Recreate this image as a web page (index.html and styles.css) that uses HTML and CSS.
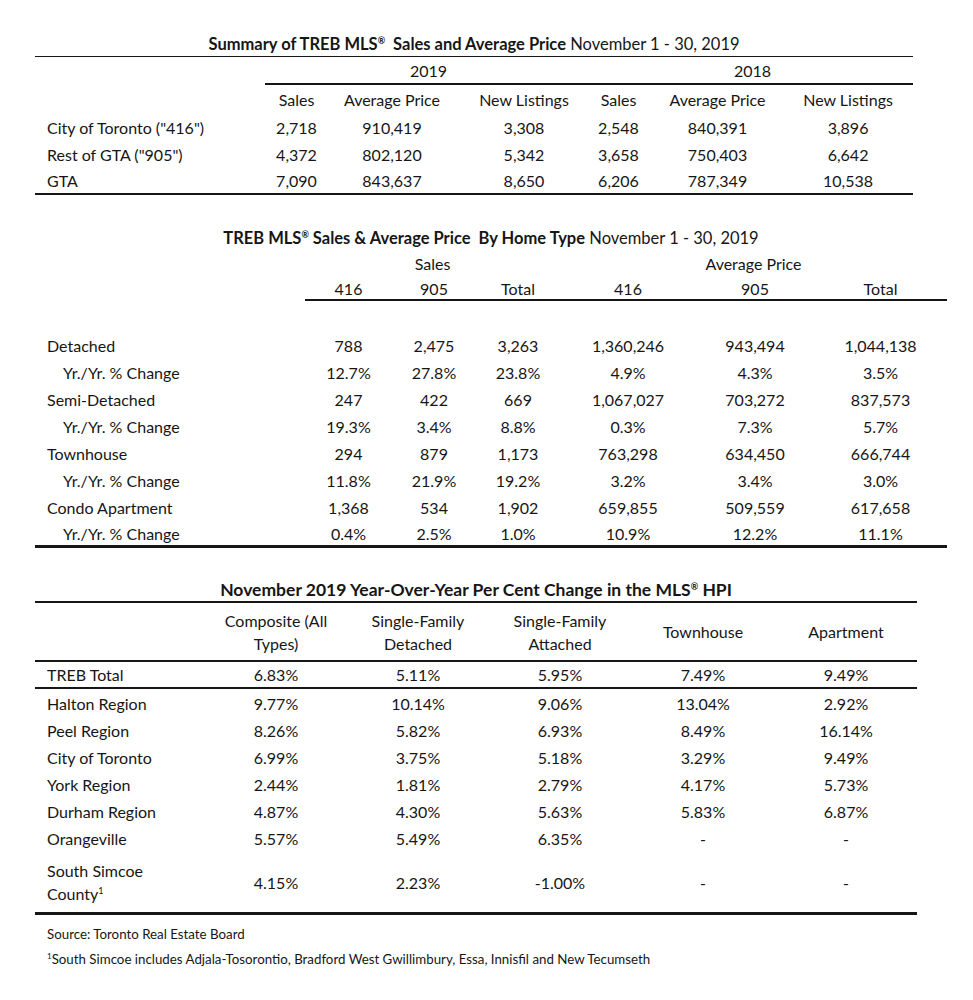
FILE: index.html
```html
<!DOCTYPE html>
<html>
<head>
<meta charset="utf-8">
<link rel="stylesheet" href="styles.css">
</head>
<body>
<div class="page">

<table class="t t1">
  <colgroup>
    <col style="width:230px"><col style="width:63px"><col style="width:128px"><col style="width:136px"><col style="width:53px"><col style="width:145px"><col style="width:123px">
  </colgroup>
  <tr class="title-row">
    <td colspan="7" class="title"><b>Summary of TREB MLS<sup>®</sup>&nbsp; Sales and Average Price</b> November 1 - 30, 2019</td>
  </tr>
  <tr class="year-row">
    <td></td>
    <td colspan="3" class="rule">2019</td>
    <td colspan="3" class="rule">2018</td>
  </tr>
  <tr class="head-row">
    <td></td><td>Sales</td><td>Average Price</td><td>New Listings</td><td>Sales</td><td>Average Price</td><td class="last">New Listings</td>
  </tr>
  <tr class="row">
    <td class="label">City of Toronto ("416")</td><td>2,718</td><td>910,419</td><td>3,308</td><td>2,548</td><td>840,391</td><td class="last">3,896</td>
  </tr>
  <tr class="row">
    <td class="label">Rest of GTA ("905")</td><td>4,372</td><td>802,120</td><td>5,342</td><td>3,658</td><td>750,403</td><td class="last">6,642</td>
  </tr>
  <tr class="row end">
    <td class="label">GTA</td><td>7,090</td><td>843,637</td><td>8,650</td><td>6,206</td><td>787,349</td><td class="last">10,538</td>
  </tr>
</table>

<table class="t t2">
  <colgroup>
    <col style="width:270px"><col style="width:87px"><col style="width:84px"><col style="width:84px"><col style="width:136px"><col style="width:118px"><col style="width:133px">
  </colgroup>
  <tr class="title-row">
    <td colspan="7" class="title"><b>TREB MLS<sup>®</sup> Sales &amp; Average Price&nbsp; By Home Type</b> November 1 - 30, 2019</td>
  </tr>
  <tr class="group-row">
    <td></td><td colspan="3">Sales</td><td colspan="3">Average Price</td>
  </tr>
  <tr class="colhead-row">
    <td></td><td class="rule">416</td><td class="rule">905</td><td class="rule">Total</td><td class="rule">416</td><td class="rule">905</td><td class="rule">Total</td>
  </tr>
  <tr class="blank-row"><td colspan="7"></td></tr>
  <tr class="row"><td class="label">Detached</td><td>788</td><td>2,475</td><td>3,263</td><td>1,360,246</td><td>943,494</td><td>1,044,138</td></tr>
  <tr class="row"><td class="label sub">Yr./Yr. % Change</td><td>12.7%</td><td>27.8%</td><td>23.8%</td><td>4.9%</td><td>4.3%</td><td>3.5%</td></tr>
  <tr class="row"><td class="label">Semi-Detached</td><td>247</td><td>422</td><td>669</td><td>1,067,027</td><td>703,272</td><td>837,573</td></tr>
  <tr class="row"><td class="label sub">Yr./Yr. % Change</td><td>19.3%</td><td>3.4%</td><td>8.8%</td><td>0.3%</td><td>7.3%</td><td>5.7%</td></tr>
  <tr class="row"><td class="label">Townhouse</td><td>294</td><td>879</td><td>1,173</td><td>763,298</td><td>634,450</td><td>666,744</td></tr>
  <tr class="row"><td class="label sub">Yr./Yr. % Change</td><td>11.8%</td><td>21.9%</td><td>19.2%</td><td>3.2%</td><td>3.4%</td><td>3.0%</td></tr>
  <tr class="row"><td class="label">Condo Apartment</td><td>1,368</td><td>534</td><td>1,902</td><td>659,855</td><td>509,559</td><td>617,658</td></tr>
  <tr class="row end"><td class="label sub">Yr./Yr. % Change</td><td>0.4%</td><td>2.5%</td><td>1.0%</td><td>10.9%</td><td>12.2%</td><td>11.1%</td></tr>
</table>

<table class="t t3">
  <colgroup>
    <col style="width:170px"><col style="width:142px"><col style="width:142px"><col style="width:142px"><col style="width:144px"><col style="width:142px">
  </colgroup>
  <tr class="title-row">
    <td colspan="6" class="title"><b>November 2019 Year-Over-Year Per Cent Change in the MLS<sup>®</sup> HPI</b></td>
  </tr>
  <tr class="hpi-head">
    <td></td><td>Composite (All<br>Types)</td><td>Single-Family<br>Detached</td><td>Single-Family<br>Attached</td><td>Townhouse</td><td>Apartment</td>
  </tr>
  <tr class="total-row">
    <td class="label">TREB Total</td><td>6.83%</td><td>5.11%</td><td>5.95%</td><td>7.49%</td><td>9.49%</td>
  </tr>
  <tr class="row first"><td class="label">Halton Region</td><td>9.77%</td><td>10.14%</td><td>9.06%</td><td>13.04%</td><td>2.92%</td></tr>
  <tr class="row"><td class="label">Peel Region</td><td>8.26%</td><td>5.82%</td><td>6.93%</td><td>8.49%</td><td>16.14%</td></tr>
  <tr class="row"><td class="label">City of Toronto</td><td>6.99%</td><td>3.75%</td><td>5.18%</td><td>3.29%</td><td>9.49%</td></tr>
  <tr class="row"><td class="label">York Region</td><td>2.44%</td><td>1.81%</td><td>2.79%</td><td>4.17%</td><td>5.73%</td></tr>
  <tr class="row"><td class="label">Durham Region</td><td>4.87%</td><td>4.30%</td><td>5.63%</td><td>5.83%</td><td>6.87%</td></tr>
  <tr class="row"><td class="label">Orangeville</td><td>5.57%</td><td>5.49%</td><td>6.35%</td><td>-</td><td>-</td></tr>
  <tr class="row tall end"><td class="label">South Simcoe<br>County<sup class="fn">1</sup></td><td>4.15%</td><td>2.23%</td><td>-1.00%</td><td>-</td><td>-</td></tr>
</table>

<div class="notes">
  <p class="note">Source: Toronto Real Estate Board</p>
  <p class="note"><sup class="fn">1</sup>South Simcoe includes Adjala-Tosorontio, Bradford West Gwillimbury, Essa, Innisfil and New Tecumseth</p>
</div>

</div>
</body>
</html>
```

FILE: styles.css
```css
html, body {
  margin: 0;
  padding: 0;
  background: #ffffff;
}

body {
  font-family: Lato, "Open Sans", "Liberation Sans", sans-serif;
  font-size: 16px;
  color: #161616;
}

.page {
  padding: 33px 0 0 35px;
}

.t {
  border-collapse: collapse;
  table-layout: fixed;
}

.t td {
  padding: 0;
  text-align: center;
  vertical-align: middle;
  white-space: nowrap;
  line-height: 19px;
}

.t td.label {
  text-align: left;
  padding-left: 12px;
}

.t td.label.sub {
  padding-left: 28px;
}

.t td.title {
  font-size: 16.5px;
}

.t3 td.title {
  font-size: 17.5px;
}

.t sup {
  font-size: 9px;
  line-height: 0;
  vertical-align: 6px;
}

sup.fn {
  font-size: 9px;
  line-height: 0;
  vertical-align: 6px;
}

.title b {
  font-weight: 700;
}

/* Table 1 */
.t1 {
  width: 878px;
}

.t1 .title-row td {
  height: 23px;
  border-bottom: 1px solid #161616;
}

.t1 .year-row td {
  height: 26px;
}

.t1 td.rule {
  border-bottom: 2px solid #161616;
}

.t1 .head-row td {
  height: 29px;
}

.t1 .row td {
  height: 27px;
}

.t1 .row.end td {
  height: 25px;
  border-bottom: 2px solid #161616;
}

.t1 td.last {
  padding-left: 0;
  padding-right: 7px;
}

/* Table 2 */
.t2 {
  width: 912px;
  margin-top: 32px;
}

.t2 .title-row td {
  height: 23px;
}

.t2 .group-row td {
  height: 27px;
}

.t2 .colhead-row td {
  height: 22px;
}

.t2 .colhead-row td.rule {
  border-bottom: 2px solid #161616;
}

.t2 .blank-row td {
  height: 31px;
}

.t2 .row td {
  height: 27px;
}

.t2 .row.end td {
  height: 24px;
  border-bottom: 3px solid #161616;
}

/* Table 3 */
.t3 {
  width: 882px;
  margin-top: 29px;
}

.t3 .title-row td {
  height: 24px;
  border-bottom: 2px solid #161616;
}

.t3 .hpi-head td {
  height: 57px;
  line-height: 23px;
  border-bottom: 2px solid #161616;
}

.t3 .total-row td {
  height: 25px;
  border-bottom: 2px solid #161616;
}

.t3 .row td {
  height: 27px;
}

.t3 .row.first td {
  height: 28px;
}

.t3 .row.tall td {
  height: 60px;
  line-height: 23px;
  border-bottom: 3px solid #161616;
}

/* Notes */
.notes {
  padding-left: 12px;
  padding-top: 7px;
}

.note {
  margin: 0;
  font-size: 13.3px;
  line-height: 25px;
}

.note sup.fn {
  font-size: 8px;
  vertical-align: 5px;
}
```
